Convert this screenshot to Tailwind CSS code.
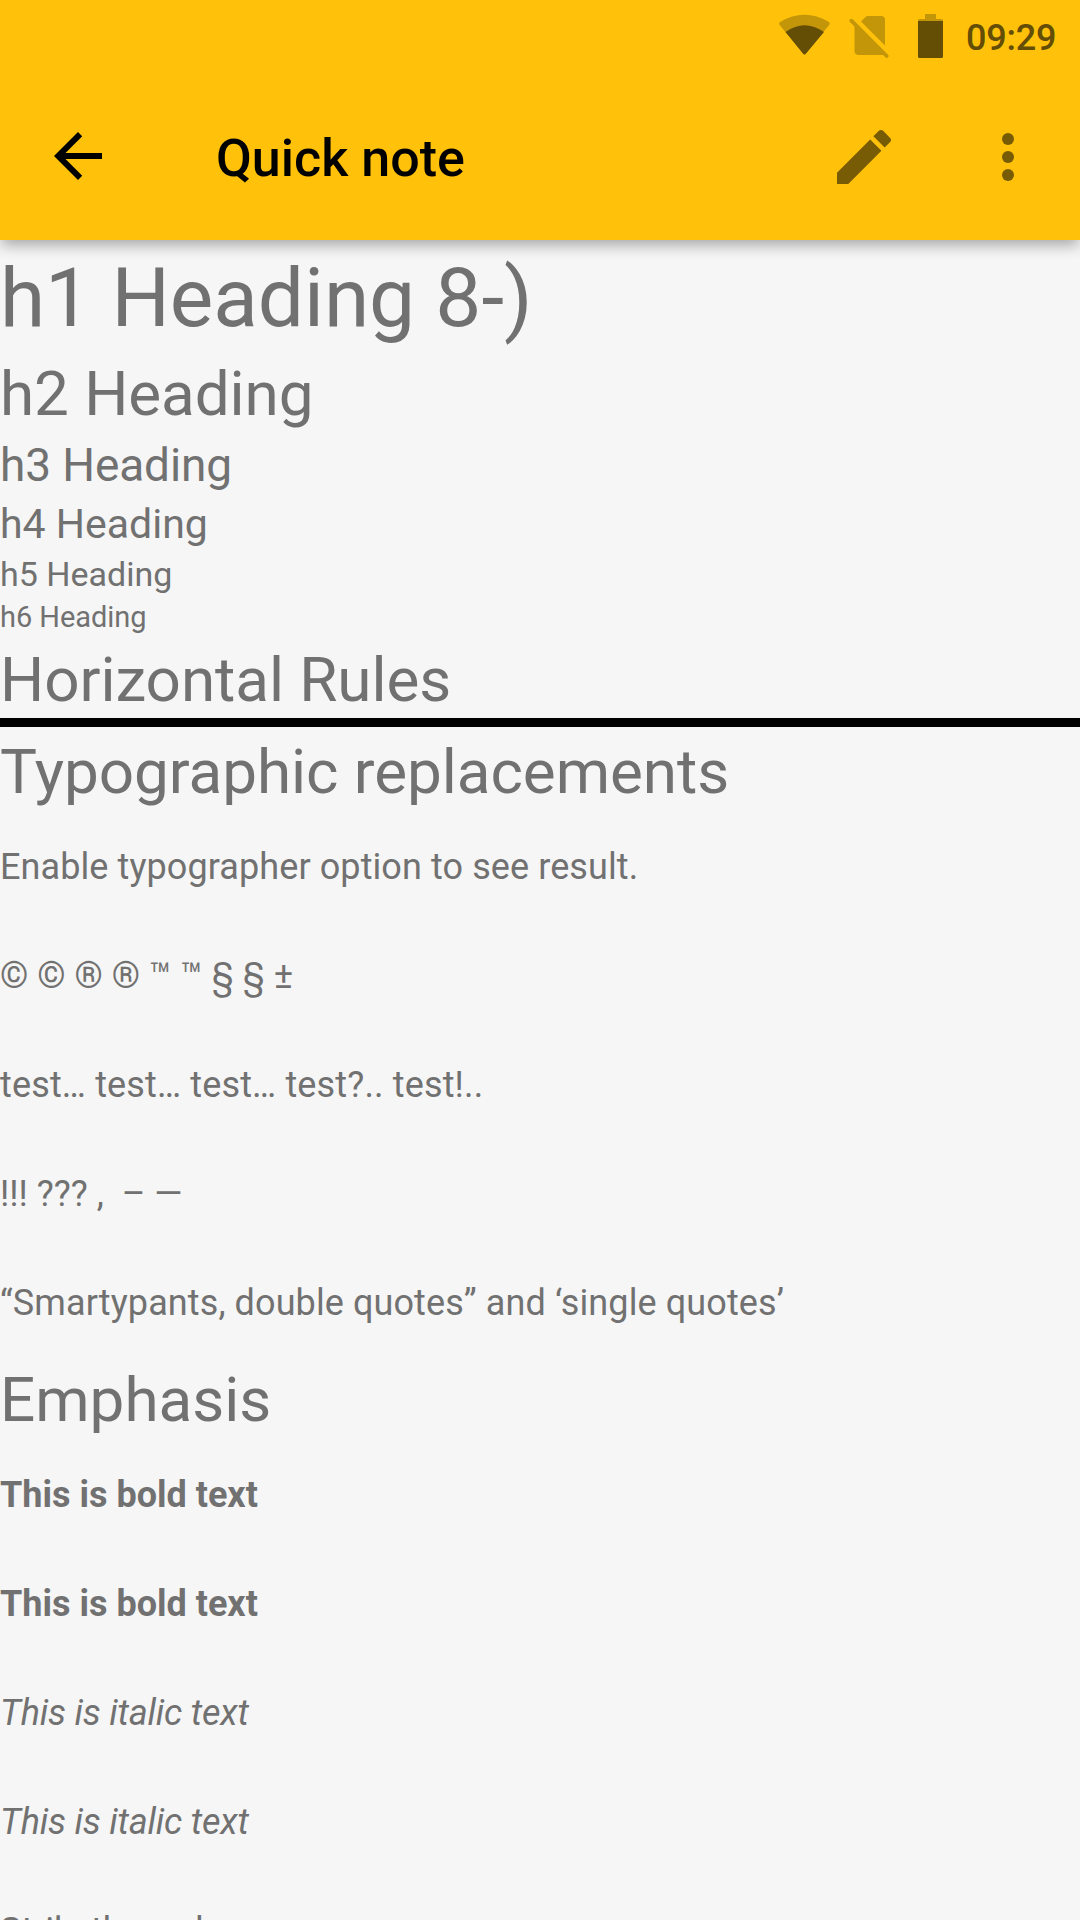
<!DOCTYPE html>
<html lang="en">
<head>
<meta charset="utf-8">
<title>Quick note</title>
<script src="https://cdn.jsdelivr.net/npm/@tailwindcss/browser@4"></script>
</head>
<body class="h-[1920px] w-[1080px] overflow-hidden bg-[#f6f6f6] font-['Roboto',sans-serif] text-[#717171]">
<header class="relative z-10 h-[240px] bg-[#ffc109] shadow-[0_6px_14px_-1px_rgba(0,0,0,0.33)]">
  <div class="flex h-[72px] items-center pl-[776px] text-[#644d05]">
    <svg class="h-[72px] w-[174px] shrink-0" viewBox="776 0 174 72">
      <path fill="#c39508" d="M779.3 24.5Q779 23 780 22Q804.500 7.500 829 22Q830.200 23 829.500 24.500L806 53.500Q804.500 55.500 803 53.500Z"/>
      <path fill="#644d05" d="M785.500 32Q804.500 18.500 824 32L806 53.500Q804.500 55.500 803 53.500Z"/>
      <path fill="#c39508" d="M861 21.500L865.500 17Q866.500 16 868 16H881Q885 16 885 20V45.500Z"/>
      <path fill="#c39508" d="M854.500 24.500L885 55H859Q854.500 55 854.500 51Z"/>
      <path stroke="#c39508" stroke-width="3.800" stroke-linecap="round" d="M851.300 20.700L886.700 56"/>
      <path fill="#c39508" d="M925 14H936V19H941.500Q943 19 943 20.500V22H918V20.500Q918 19 919.500 19H925Z"/>
      <path fill="#644d05" d="M918 21H943V56.500Q943 58 941.500 58H919.500Q918 58 918 56.500Z"/>
    </svg>
    <span class="ml-[16px] mt-[3px] text-[36px] font-medium leading-[42px] tracking-[-0.2px]">09:29</span>
  </div>
  <div class="flex h-[168px] items-start pt-[48px]">
    <svg class="ml-[42px] size-[72px] shrink-0" viewBox="0 0 24 24" fill="#000"><path d="M20 11H7.830l5.590-5.590L12 4l-8 8 8 8 1.410-1.410L7.830 13H20v-2z"/></svg>
    <h1 class="ml-[102px] mt-[9px] text-[52px] font-medium leading-[60px] text-black">Quick note</h1>
    <div class="ml-auto mt-px flex gap-[72px] pr-[36px]">
      <svg class="size-[72px]" viewBox="0 0 24 24" fill="#775b05"><path d="M3 17.250V21h3.750L17.810 9.940l-3.750-3.750L3 17.250zM20.710 7.040c.390-.390.390-1.020 0-1.410l-2.340-2.340c-.390-.390-1.020-.390-1.410 0l-1.830 1.830 3.750 3.750 1.830-1.830z"/></svg>
      <svg class="size-[72px]" viewBox="0 0 24 24" fill="#775b05"><circle cx="12" cy="6" r="2"/><circle cx="12" cy="12" r="2"/><circle cx="12" cy="18" r="2"/></svg>
    </div>
  </div>
</header>
<main class="flex flex-col whitespace-pre text-[36px] leading-[109px]">
  <h1 class="text-[82px] leading-[116px] tracking-[-0.06px]">h1 Heading 8-)</h1>
  <h2 class="text-[62px] leading-[76px] tracking-[-0.08px]">h2 Heading</h2>
  <h3 class="text-[46px] leading-[66px] tracking-[-0.12px]">h3 Heading</h3>
  <h4 class="text-[41px] leading-[52px]">h4 Heading</h4>
  <h5 class="text-[34px] leading-[49px]">h5 Heading</h5>
  <h6 class="text-[29px] leading-[36px] tracking-[-0.06px]">h6 Heading</h6>
  <h2 class="mt-[7px] text-[62px] leading-[76px] tracking-[-0.07px]">Horizontal Rules</h2>
  <hr class="h-[9px] border-0 bg-black">
  <h2 class="mt-[7px] mb-[3px] text-[62px] leading-[76px] tracking-[-0.06px]">Typographic replacements</h2>
  <p class="tracking-[0.09px]">Enable typographer option to see result.</p>
  <p>© © ® ® ™ ™ § § ±</p>
  <p class="tracking-[0.15px]">test… test… test… test?.. test!..</p>
  <p>!!! ??? ,  – —</p>
  <p class="tracking-[0.1px]">“Smartypants, double quotes” and ‘single quotes’</p>
  <h2 class="mt-[4px] mb-[3px] text-[62px] leading-[76px]">Emphasis</h2>
  <p class="font-bold">This is bold text</p>
  <p class="font-bold">This is bold text</p>
  <p class="tracking-[-0.2px] italic">This is italic text</p>
  <p class="tracking-[-0.2px] italic">This is italic text</p>
  <p>Strikethrough</p>
</main>
</body>
</html>
